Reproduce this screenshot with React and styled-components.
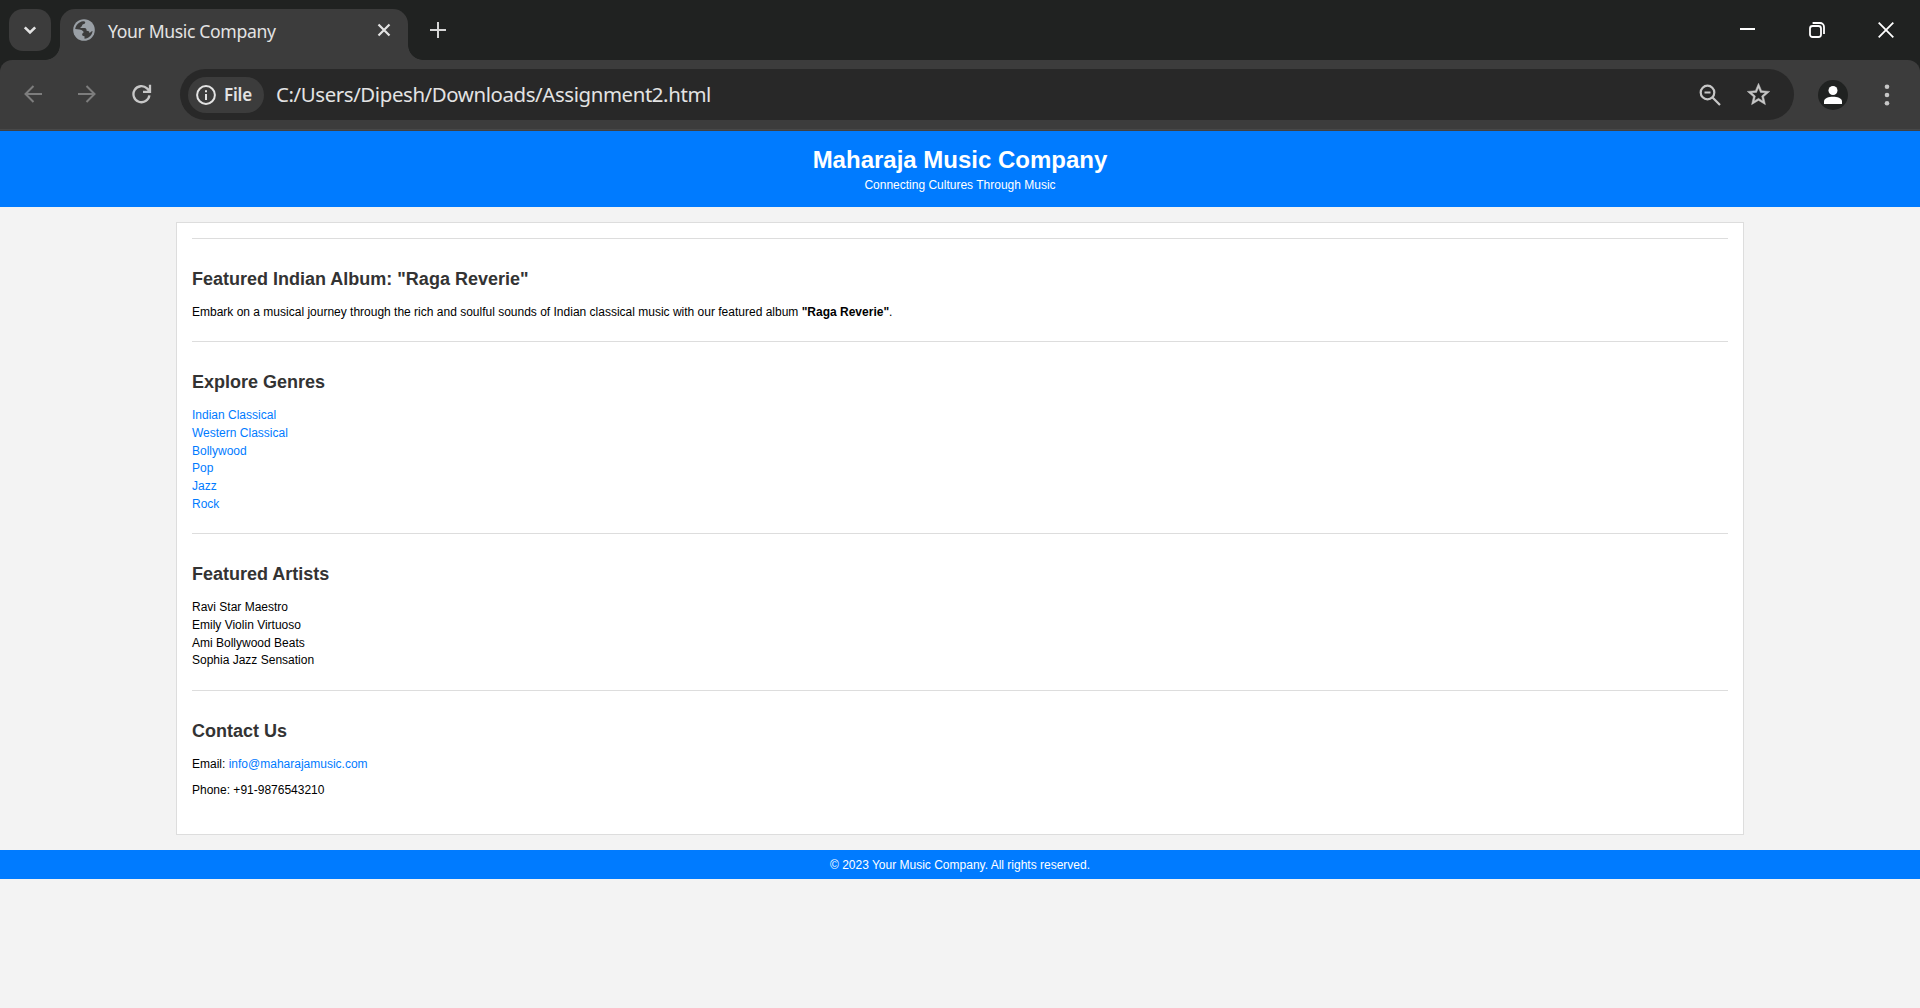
import React from 'react';
import styled, { createGlobalStyle } from 'styled-components';

const Global = createGlobalStyle`
  * { box-sizing: border-box; }
  body { margin: 0; background: #f3f3f3; }
  h1, h2, p, ul { margin: 0; padding: 0; }
  a { color: #007bff; text-decoration: none; }
`;

const uiFont = '"Noto Sans", "Open Sans", sans-serif';

const Window = styled.div`
  min-height: 1008px;
  background: #f3f3f3;
  overflow: hidden;
`;

const TabStrip = styled.div`
  display: flex;
  height: 60px;
  padding: 9px 26px 0 9px;
  background: #202221;
`;

const TabSearch = styled.button`
  display: grid;
  place-items: center;
  width: 42px;
  height: 42px;
  padding: 0;
  border: 0;
  border-radius: 14px;
  background: #3c3c3c;
  color: #e3e3e3;
`;

const Tab = styled.div`
  position: relative;
  display: flex;
  align-items: center;
  width: 348px;
  height: 51px;
  margin-left: 9px;
  padding: 0 17px 9px 13px;
  border-radius: 15px 15px 0 0;
  background: #3c3c3c;
  color: #e3e3e3;

  &::before,
  &::after {
    content: '';
    position: absolute;
    bottom: 0;
    width: 15px;
    height: 15px;
  }
  &::before {
    left: -15px;
    background: radial-gradient(circle at 0 0, transparent 14.5px, #3c3c3c 15.2px);
  }
  &::after {
    right: -15px;
    background: radial-gradient(circle at 100% 0, transparent 14.5px, #3c3c3c 15.2px);
  }
`;

const TabTitle = styled.span`
  flex: 1;
  margin-left: 13px;
  padding-top: 2px;
  font: 400 17.6px/24px ${uiFont};
  letter-spacing: -0.36px;
  white-space: nowrap;
`;

const NewTab = styled.div`
  display: grid;
  place-items: center;
  width: 42px;
  height: 42px;
  margin-left: 9px;
  color: #d6d6d6;
`;

const WindowControls = styled.div`
  display: flex;
  align-items: center;
  gap: 53px;
  height: 41px;
  margin-left: auto;
  color: #fff;
`;

const ToolbarBack = styled.div`
  background: #202221;
`;

const Toolbar = styled.div`
  display: flex;
  align-items: center;
  height: 71px;
  padding: 0 20px 2px 19px;
  border-radius: 12px 12px 0 0;
  border-bottom: 1px solid #3f4043;
  box-shadow: inset 0 -1px 0 #484848;
  background: #3c3c3c;
`;

const NavButton = styled.div`
  display: grid;
  place-items: center;
  width: 27px;
  height: 27px;
  margin-right: ${(p) => p.$after};
  color: ${(p) => (p.$dim ? '#7d7d7d' : '#c7c7c7')};
`;

const Omnibox = styled.div`
  display: flex;
  align-items: center;
  width: 1614px;
  height: 51px;
  margin-top: 1px;
  padding: 0 22px 0 8px;
  border-radius: 26px;
  background: #282828;
  color: #e3e3e3;
`;

const FileChip = styled.div`
  display: flex;
  align-items: center;
  gap: 8px;
  width: 76px;
  height: 36px;
  padding-left: 8px;
  border-radius: 18px;
  background: #3c3c3c;
  font: 600 17px/24px ${uiFont};
  letter-spacing: -0.2px;
`;

const Url = styled.span`
  flex: 1;
  margin-left: 12px;
  padding-bottom: 1px;
  font: 400 20.4px/28px ${uiFont};
  letter-spacing: -0.39px;
  white-space: nowrap;
`;

const OmniboxActions = styled.div`
  display: flex;
  align-items: center;
  gap: 24px;
  color: #c7c7c7;
`;

const Avatar = styled.div`
  display: grid;
  place-items: center;
  width: 30px;
  height: 30px;
  margin-top: 1px;
  margin-left: 24px;
  border-radius: 50%;
  background: #202221;
`;

const Menu = styled.div`
  display: grid;
  place-items: center;
  width: 18px;
  margin-top: 1px;
  margin-left: 30px;
  color: #c7c7c7;
`;

const Page = styled.div`
  font: 12px/18px "Liberation Sans", Arial, sans-serif;
  color: #000;
`;

const Header = styled.header`
  height: 76px;
  padding-top: 15px;
  background: #007bff;
  color: #fff;
  text-align: center;

  h1 { font-size: 24px; line-height: 28px; }
  p { line-height: 22px; }
`;

const Container = styled.main`
  width: 1568px;
  height: 613px;
  margin: 15px auto;
  padding: 15px;
  border: 1px solid #ddd;
  background: #fff;
`;

const Section = styled.section`
  padding: 30px 0 20px;
  border-top: 1px solid #ddd;

  h2 {
    margin-bottom: 14px;
    font-size: 18px;
    line-height: 20px;
    color: #333;
  }
  p + p { margin-top: 8px; }
`;

const List = styled.ul`
  height: ${(p) => p.$height};
  padding-top: 1px;
  list-style: none;
  line-height: 17.8px;
`;

const Footer = styled.footer`
  height: 29px;
  padding-top: 1px;
  background: #007bff;
  color: #fff;
  line-height: 29px;
  text-align: center;
`;

const genres = ['Indian Classical', 'Western Classical', 'Bollywood', 'Pop', 'Jazz', 'Rock'];
const artists = ['Ravi Star Maestro', 'Emily Violin Virtuoso', 'Ami Bollywood Beats', 'Sophia Jazz Sensation'];

const Stroke = ({ w, h = w, sw = 2, children, ...rest }) => (
  <svg width={w} height={h} viewBox={`0 0 ${w} ${h}`} fill="none" stroke="currentColor" strokeWidth={sw} {...rest}>
    {children}
  </svg>
);

const STAR = 'M22 9.24l-7.19-.62L12 2 9.19 8.63 2 9.24l5.46 4.73L5.82 21 12 17.27 18.18 21l-1.63-7.03L22 9.24zM12 15.4l-3.76 2.27 1-4.28-3.32-2.88 4.38-.38L12 6.1l1.71 4.04 4.38.38-3.32 2.88 1 4.28L12 15.4z';

export default function App() {
  return (
    <Window>
      <Global />
      <TabStrip>
        <TabSearch>
          <Stroke w={14} sw={2.6}><path d="M1.8 4.3L7 9.5l5.2-5.2" /></Stroke>
        </TabSearch>
        <Tab>
          <svg width="22" height="22" viewBox="0 0 22 22">
            <circle cx="11" cy="11" r="10.8" fill="#9aa0a6" />
            <path d="M2.200 10C2.800 6 5.700 2.900 10 2.200c2.300-.2 2.800.9 1.800 2.200-.9 1-2.600.6-2.700 2.100C9 7.800 7.600 7.600 7.300 8.900h4.200c2 .1 2.200 1.700 2.100 2.900 1.900.1 2.700.5 2.800 2.100 1.300-.4 2-1.700 3.200-1.900-.5 4.200-3.800 7.400-8.100 7.800v-2.600c-1.700 0-2.500-.8-2.400-2.500 1.300-.4 1.800-1.600 1.100-2.500-1.900-2.200-5.300-1.900-8-2.200z" fill="#3c3c3c" />
          </svg>
          <TabTitle>Your Music Company</TabTitle>
          <Stroke w={14} sw={2.2}><path d="M1.500 1.500l11 11M12.500 1.500l-11 11" /></Stroke>
        </Tab>
        <NewTab><Stroke w={16}><path d="M8 0v16M0 8h16" /></Stroke></NewTab>
        <WindowControls>
          <Stroke w={16}><path d="M0 7h15" /></Stroke>
          <Stroke w={16} sw={1.8}>
            <rect x="1" y="4" width="11" height="11" rx="2.500" />
            <path d="M3.600 1H11a4 4 0 0 1 4 4v7" />
          </Stroke>
          <Stroke w={16} sw={1.8}><path d="M.7.700l14.600 14.600M15.300.700L.7 15.300" /></Stroke>
        </WindowControls>
      </TabStrip>

      <ToolbarBack>
        <Toolbar>
          <NavButton $dim $after="27px"><Stroke w={18}><path d="M18 9H1.500M9.500 1L1.500 9l8 8" /></Stroke></NavButton>
          <NavButton $dim $after="28px"><Stroke w={18}><path d="M0 9h16.500M8.500 1l8 8-8 8" /></Stroke></NavButton>
          <NavButton $after="25px">
            <Stroke w={20} sw={2.3}>
              <path d="M17.400 11.300A8 8 0 1 1 15 4.400l2.700 2.700M18 0.800v7h-7" />
            </Stroke>
          </NavButton>
          <Omnibox>
            <FileChip>
              <Stroke w={20} sw={2}><circle cx="10" cy="10" r="8.900" /><path d="M10 9v6M10 5.300v2" /></Stroke>
              File
            </FileChip>
            <Url>C:/Users/Dipesh/Downloads/Assignment2.html</Url>
            <OmniboxActions>
              <Stroke w={22} sw={2.2}><circle cx="8.500" cy="8.500" r="6.800" /><path d="M5.500 8.500h6M13.300 13.300l7.700 7.700" /></Stroke>
              <svg width="27" height="27" viewBox="0 0 24 24" fill="currentColor" stroke="currentColor" strokeWidth="0.4">
                <path d={STAR} />
              </svg>
            </OmniboxActions>
          </Omnibox>
          <Avatar>
            <svg width="18" height="18" viewBox="0 0 18 18" fill="#fff">
              <circle cx="9" cy="4.500" r="4.500" />
              <path d="M0 18v-2.500C0 12 5 10.800 9 10.800s9 1.200 9 4.700V18z" />
            </svg>
          </Avatar>
          <Menu>
            <svg width="6" height="22" viewBox="0 0 6 22" fill="currentColor">
              <circle cx="3" cy="2.700" r="2.300" /><circle cx="3" cy="11" r="2.300" /><circle cx="3" cy="19.300" r="2.300" />
            </svg>
          </Menu>
        </Toolbar>
      </ToolbarBack>

      <Page>
        <Header>
          <h1>Maharaja Music Company</h1>
          <p>Connecting Cultures Through Music</p>
        </Header>
        <Container>
          <Section>
            <h2>Featured Indian Album: "Raga Reverie"</h2>
            <p>
              Embark on a musical journey through the rich and soulful sounds of Indian classical music with our featured
              album <strong>"Raga Reverie"</strong>.
            </p>
          </Section>
          <Section>
            <h2>Explore Genres</h2>
            <List $height="107px">
              {genres.map((g) => <li key={g}><a href="#genre">{g}</a></li>)}
            </List>
          </Section>
          <Section>
            <h2>Featured Artists</h2>
            <List $height="72px">
              {artists.map((a) => <li key={a}>{a}</li>)}
            </List>
          </Section>
          <Section>
            <h2>Contact Us</h2>
            <p>Email: <a href="mailto:info@maharajamusic.com">info@maharajamusic.com</a></p>
            <p>Phone: +91-9876543210</p>
          </Section>
        </Container>
        <Footer>© 2023 Your Music Company. All rights reserved.</Footer>
      </Page>
    </Window>
  );
}
